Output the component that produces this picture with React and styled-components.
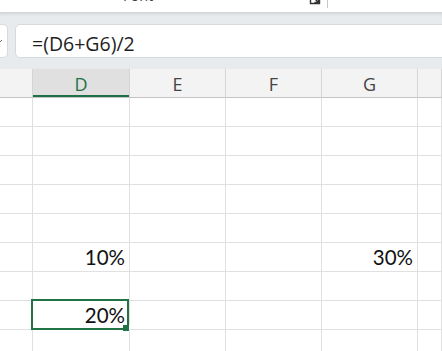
import React from "react";
import styled, { createGlobalStyle } from "styled-components";

const GlobalStyle = createGlobalStyle`
  html, body { margin: 0; padding: 0; background: #ffffff; }
  body { overflow: hidden; width: 442px; height: 351px; }
  * { box-sizing: border-box; }
`;

const Page = styled.div`
  width: 442px;
  height: 351px;
  overflow: hidden;
  background: #ffffff;
  font-family: "Open Sans", "Noto Sans", sans-serif;
`;

const Ribbon = styled.div`
  height: 12px;
  background: #ffffff;
  display: flex;
  align-items: flex-start;
  overflow: hidden;
`;

const GroupLabel = styled.div`
  margin-left: 123px;
  margin-top: -14px;
  font-size: 14.5px;
  line-height: 20px;
  color: #424242;
`;

const Launcher = styled.svg`
  margin-left: 156px;
  margin-top: -7px;
  flex: none;
`;

const GroupDivider = styled.div`
  width: 1px;
  height: 8px;
  margin-left: 6px;
  background: #c8c8c8;
`;

const FormulaBar = styled.div`
  height: 57px;
  background: #e8ebee;
  padding: 12px 0 11px;
  display: flex;
  gap: 7px;
  box-shadow: inset 0 4px 4px -3px rgba(0, 0, 0, 0.14);
`;

const NameBoxTail = styled.div`
  width: 8px;
  height: 34px;
  flex: none;
  background: #ffffff;
  border: 1px solid #d7dadd;
  border-left: none;
  border-radius: 0 5px 5px 0;
  display: flex;
  align-items: center;
`;

const FormulaInput = styled.div`
  flex: 1;
  height: 34px;
  margin-right: -10px;
  background: #ffffff;
  border: 1px solid #d7dadd;
  border-radius: 5px;
  padding: 5px 0 0 16px;
  display: flex;
  align-items: center;
  font-family: "Open Sans", "Noto Sans", sans-serif;
  font-size: 19.5px;
  color: #1f1f1f;
`;

const Sheet = styled.div`
  display: grid;
  grid-template-columns: 33px 97px 96px 96px 96px 1fr;
  grid-auto-rows: 29px;
`;

const HeaderCell = styled.div`
  border-right: 1px solid #d5d5d5;
  border-bottom: 1px solid #c4c4c4;
  background: ${(p) => (p.$active ? "#e0e0e0" : "#f3f3f3")};
  box-shadow: ${(p) => (p.$active ? "inset 0 -2px 0 #1e7145" : "none")};
  color: ${(p) => (p.$active ? "#1e7145" : "#444444")};
  display: flex;
  align-items: center;
  justify-content: center;
  font-family: "Open Sans", "Noto Sans", sans-serif;
  font-size: 18px;
  padding-top: 2px;
`;

const Cell = styled.div`
  position: relative;
  border-right: 1px solid #e0e0e0;
  border-bottom: 1px solid #e0e0e0;
  display: flex;
  align-items: flex-end;
  justify-content: flex-end;
  padding: 0 4px 3px 0;
  font-family: "Lato", "Liberation Sans", sans-serif;
  font-size: 20.5px;
  line-height: 22px;
  color: #111111;
`;

const Selection = styled.div`
  position: absolute;
  left: -2px;
  top: -2px;
  right: 0;
  bottom: -1px;
  border: 2px solid #217346;
  pointer-events: none;
`;

const FillHandle = styled.div`
  position: absolute;
  right: -3px;
  bottom: -4px;
  width: 7px;
  height: 7px;
  background: #217346;
  border: 1px solid #ffffff;
  border-top: none;
  border-left: none;
`;

const columns = ["", "D", "E", "F", "G", ""];
const data = {
  6: { D: "10%", G: "30%" },
  8: { D: "20%" },
};
const rows = [1, 2, 3, 4, 5, 6, 7, 8, 9];

export default function App() {
  return (
    <Page>
      <GlobalStyle />
      <Ribbon>
        <GroupLabel>Font</GroupLabel>
        <Launcher width="12" height="12" viewBox="0 0 12 12">
          <path d="M1.5 1.5 V10.5 H10.5 V7" fill="none" stroke="#333" strokeWidth="1.4" />
          <path d="M4 4 L9.5 9.5 M9.5 5.5 V9.5 H5.5" fill="none" stroke="#333" strokeWidth="1.4" />
        </Launcher>
        <GroupDivider />
      </Ribbon>
      <FormulaBar>
        <NameBoxTail>
          <svg width="4" height="4" viewBox="0 0 4 4">
            <path d="M-2 1 L0 3 L2 1" fill="none" stroke="#666" strokeWidth="1" />
          </svg>
        </NameBoxTail>
        <FormulaInput>=(D6+G6)/2</FormulaInput>
      </FormulaBar>
      <Sheet>
        {columns.map((c, i) => (
          <HeaderCell key={"h" + i} $active={c === "D"}>
            {c}
          </HeaderCell>
        ))}
        {rows.map((r) =>
          columns.map((c, i) => (
            <Cell key={r + "-" + i}>
              {data[r] && c && data[r][c]}
              {r === 8 && c === "D" && (
                <Selection>
                  <FillHandle />
                </Selection>
              )}
            </Cell>
          ))
        )}
      </Sheet>
    </Page>
  );
}
